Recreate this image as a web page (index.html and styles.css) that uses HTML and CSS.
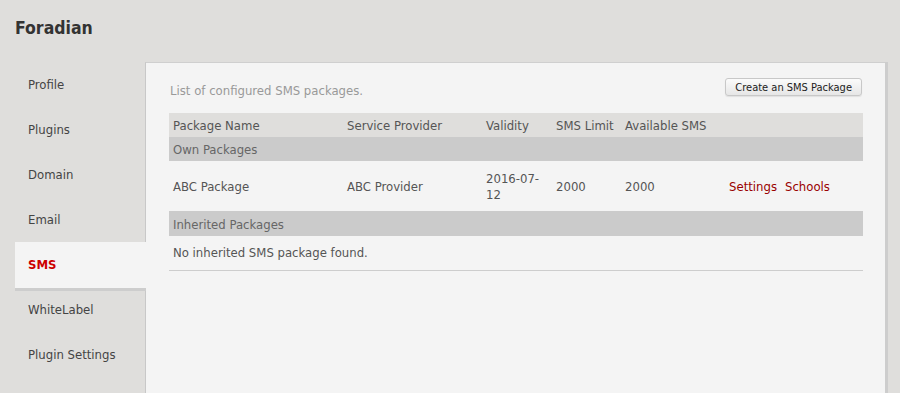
FILE: index.html
```html
<!DOCTYPE html>
<html>
<head>
<meta charset="utf-8">
<link rel="stylesheet" href="styles.css">
</head>
<body>
<div class="header"><h1 class="brand">Foradian</h1></div>
<div class="main">
  <ul class="sidebar">
    <li class="nav-item">Profile</li>
    <li class="nav-item">Plugins</li>
    <li class="nav-item">Domain</li>
    <li class="nav-item">Email</li>
    <li class="nav-item active">SMS</li>
    <li class="nav-item">WhiteLabel</li>
    <li class="nav-item">Plugin Settings</li>
  </ul>
  <div class="panel">
    <div class="panel-top">
      <p class="desc">List of configured SMS packages.</p>
      <button class="btn">Create an SMS Package</button>
    </div>
    <table class="pkg-table">
      <colgroup>
        <col class="c1"><col class="c2"><col class="c3"><col class="c4"><col class="c5"><col class="c6">
      </colgroup>
      <thead>
        <tr class="head-row">
          <th>Package Name</th><th>Service Provider</th><th>Validity</th><th>SMS Limit</th><th>Available SMS</th><th></th>
        </tr>
      </thead>
      <tbody>
        <tr class="group-row"><td colspan="6">Own Packages</td></tr>
        <tr class="data-row">
          <td>ABC Package</td><td>ABC Provider</td><td>2016-07-<br>12</td><td>2000</td><td>2000</td>
          <td><a class="link">Settings</a><a class="link">Schools</a></td>
        </tr>
        <tr class="group-row group-row-2"><td colspan="6">Inherited Packages</td></tr>
        <tr class="empty-row"><td colspan="6">No inherited SMS package found.</td></tr>
      </tbody>
    </table>
  </div>
</div>
</body>
</html>
```
FILE: styles.css
```css
html, body {
  margin: 0;
  padding: 0;
  height: 100%;
  overflow: hidden;
}
body {
  background: #dfdedc;
  font-family: "DejaVu Sans Condensed", "DejaVu Sans", sans-serif;
  font-stretch: condensed;
  font-size: 13px;
  color: #444;
}
.header {
  height: 62px;
  padding-left: 15px;
}
.brand {
  margin: 0;
  padding-top: 17px;
  font-size: 17.5px;
  font-weight: bold;
  color: #333;
  line-height: 22px;
}
.main {
  display: flex;
  align-items: stretch;
  height: calc(100% - 62px);
}
.sidebar {
  list-style: none;
  margin: 0 0 0 15px;
  padding: 0;
  width: 130px;
  flex: none;
}
.nav-item {
  height: 45px;
  line-height: 45px;
  padding-left: 13px;
  color: #444;
}
.nav-item.active {
  position: relative;
  z-index: 1;
  margin-right: -1px;
  background: #f4f4f4;
  color: #c00;
  font-weight: bold;
  box-shadow: 0 1px 0 #f4f4f4, 0 4px 0 #cdcdcd;
}
.panel {
  width: 694px;
  flex: none;
  background: #f4f4f4;
  border-top: 1px solid #cfcfcf;
  border-left: 1px solid #c8c8c8;
  box-shadow: 3px 0 0 #cdcdcd;
  padding: 15px 22px 0 23px;
}
.panel-top {
  display: flex;
  justify-content: space-between;
  align-items: flex-start;
  height: 35px;
}
.desc {
  margin: 0;
  padding-top: 5px;
  padding-left: 1px;
  color: #999;
  line-height: 16px;
}
.btn {
  margin-right: 1px;
  height: 18px;
  padding: 0 9px;
  font-family: inherit;
  font-stretch: condensed;
  font-size: 11px;
  color: #222;
  border: 1px solid #c8c8c8;
  border-radius: 3px;
  background: linear-gradient(#fbfbfb, #e6e6e6);
  box-shadow: 0 1px 1px rgba(0,0,0,0.08);
}
.pkg-table {
  width: 694px;
  border-collapse: collapse;
  table-layout: fixed;
}
.c1 { width: 174px; }
.c2 { width: 139px; }
.c3 { width: 70px; }
.c4 { width: 69px; }
.c5 { width: 104px; }
.c6 { width: 138px; }
.pkg-table th, .pkg-table td {
  padding: 0 4px;
  text-align: left;
  font-weight: normal;
  line-height: 16px;
  vertical-align: middle;
  color: #555;
}
.head-row th {
  background: #dfdedc;
  height: 23px;
  padding-top: 1px;
}
.group-row td {
  background: #cbcbcb;
  height: 22px;
  padding-top: 2px;
  color: #666;
}
.group-row-2 td {
  height: 23px;
}
.data-row td {
  height: 48px;
  padding-top: 2px;
}
.empty-row td {
  height: 34px;
  border-bottom: 1px solid #cdcdcd;
}
.link {
  color: #990000;
  margin-right: 8px;
  cursor: pointer;
}
```
